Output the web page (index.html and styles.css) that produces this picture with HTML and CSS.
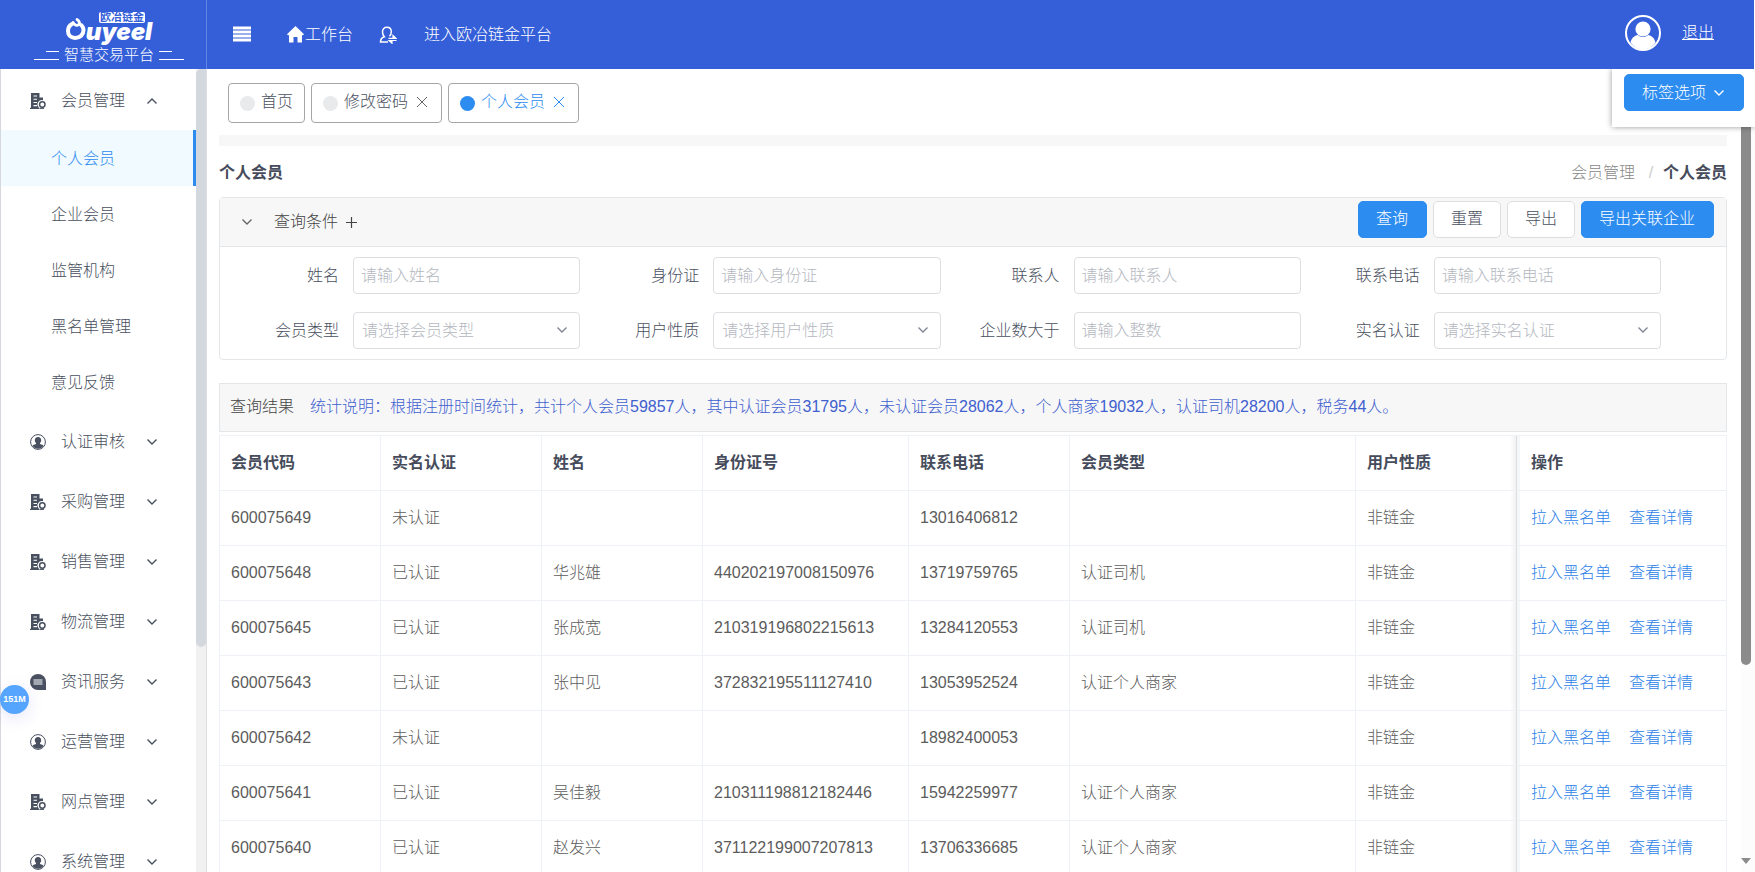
FILE: index.html
```html
<!DOCTYPE html>
<html lang="zh-CN">
<head>
<meta charset="utf-8">
<title>智慧交易平台</title>
<link rel="stylesheet" href="styles.css">
</head>
<body>
<svg class="defs" width="0" height="0" aria-hidden="true">
  <symbol id="i-down" viewBox="0 0 12 8"><path d="M1.500 1.500 6 6l4.500-4.500" fill="none" stroke="currentColor" stroke-width="1.400"/></symbol>
  <symbol id="i-up" viewBox="0 0 12 8"><path d="M1.500 6.500 6 2l4.500 4.500" fill="none" stroke="currentColor" stroke-width="1.400"/></symbol>
  <symbol id="i-close" viewBox="0 0 12 12"><path d="M1 1l10 10M11 1 1 11" fill="none" stroke="currentColor" stroke-width="1"/></symbol>
  <symbol id="i-building" viewBox="0 0 16 16"><path fill="currentColor" fill-rule="evenodd" d="M1 0h8.500v4.500H13v2.800A4.200 4.200 0 0 0 8.500 14l.8 2H0v-1.300h1zM3.500 2.500v1.100H7V2.500zm0 3.200v1.100H7V5.700zm0 3.200V10H7V8.900zm0 3.200v1.100H7v-1.100z"/><circle cx="12.300" cy="11.500" r="2.700" fill="none" stroke="currentColor" stroke-width="1.500"/><path d="M9.500 15.300h4.500" stroke="currentColor" stroke-width="1.200"/></symbol>
  <symbol id="i-person" viewBox="0 0 16 16"><circle cx="8" cy="8" r="7.400" fill="none" stroke="currentColor" stroke-width="1"/><path fill="currentColor" d="M8 3c2.100 0 3.200 1.400 3.200 3.200 0 1.200-.5 2.200-1.200 2.800v.9l2.900 1.200c.5.200.6.700.3 1.100A6.400 6.400 0 0 1 8 14.800a6.400 6.400 0 0 1-5.200-2.600c-.3-.4-.2-.9.300-1.100L6 9.900V9c-.7-.6-1.200-1.600-1.200-2.800C4.800 4.400 5.900 3 8 3z"/></symbol>
  <symbol id="i-chat" viewBox="0 0 16 16"><path fill="currentColor" d="M8 0a8 8 0 0 1 8 8v8H8A8 8 0 0 1 8 0z"/><path d="M3.500 6h9M3.500 8h9M3.500 10h9" stroke="#fff"/></symbol>
</svg>

<header class="topbar">
  <div class="brand">
    <div class="logo-tag">欧冶链金</div>
    <div class="logo"><svg class="logo-mark" viewBox="0 0 20 22"><path d="M6 6C3.300 7.500 2 10 2 13c0 4.200 3 6.900 7.200 6.900 4.800 0 8.300-3.300 8.300-7.700 0-2-.8-3.900-2.400-5.200" fill="none" stroke="#fff" stroke-width="4" stroke-linecap="round"/><path d="M7 4.500C8.500 7.500 11 8 12.700 6.500 14.200 5 13.300 3 11 1.500" fill="none" stroke="#fff" stroke-width="2.800" stroke-linecap="round"/></svg><span class="logo-word">uyeel</span></div>
    <div class="slogan"><i class="rule rule-l"></i>智慧交易平台<i class="rule rule-r"></i></div>
  </div>
  <nav class="topnav">
    <button class="icon-btn" aria-label="菜单"><svg width="18" height="16" viewBox="0 0 18 16"><path d="M0 2h18M0 6h18M0 10h18M0 14h18" stroke="#fff" stroke-width="3"/></svg></button>
    <a class="nav-home" href="#"><svg width="17" height="17" viewBox="0 0 17 17"><path fill="#fff" d="M8.500 0 17 8.300l-1.200 1.200-.8-.7V16.500h-4.500V11h-4v5.500H2V8.800l-.8.700L0 8.300z"/></svg>工作台</a>
    <a class="nav-user" href="#" aria-label="切换用户"><svg width="18" height="18" viewBox="0 0 18 18"><path d="M9 16H1.500c0-3 1.500-4.500 3.800-5.200C4 9.500 3.500 8 3.500 5.700 3.500 3 5.300 1.300 7.900 1.300s4.400 1.700 4.400 4.400c0 1.800-.6 3.300-1.800 4.500" fill="none" stroke="#fff" stroke-width="1.500"/><path d="M9.500 12.300H17L14 9.500v2.800M17.500 14.500H10l3 2.700v-2.700" fill="#fff" stroke="#fff" stroke-width="1.200"/></svg></a>
    <a class="nav-link" href="#">进入欧冶链金平台</a>
  </nav>
  <div class="account">
    <svg width="36" height="36" viewBox="0 0 36 36"><circle cx="18" cy="18" r="17" fill="none" stroke="#fff" stroke-width="2"/><circle cx="18" cy="14" r="7.600" fill="#fff"/><path fill="#fff" d="M5.500 27.500c1-4.500 4-7 7.500-7.500 3 2.700 7 2.700 10 0 3.500.5 6.500 3 7.500 7.500A16 16 0 0 1 18 34.500a16 16 0 0 1-12.500-7z"/></svg>
    <a href="#">退出</a>
  </div>
</header>

<div class="body">
  <aside class="sidebar">
    <ul class="menu">
      <li><a class="group" href="#"><svg class="gi"><use href="#i-building"/></svg>会员管理<svg class="arrow"><use href="#i-up"/></svg></a>
        <ul class="sub">
          <li><a class="active" href="#">个人会员</a></li>
          <li><a href="#">企业会员</a></li>
          <li><a href="#">监管机构</a></li>
          <li><a href="#">黑名单管理</a></li>
          <li><a href="#">意见反馈</a></li>
        </ul>
      </li>
      <li><a class="group" href="#"><svg class="gi"><use href="#i-person"/></svg>认证审核<svg class="arrow"><use href="#i-down"/></svg></a></li>
      <li><a class="group" href="#"><svg class="gi"><use href="#i-building"/></svg>采购管理<svg class="arrow"><use href="#i-down"/></svg></a></li>
      <li><a class="group" href="#"><svg class="gi"><use href="#i-building"/></svg>销售管理<svg class="arrow"><use href="#i-down"/></svg></a></li>
      <li><a class="group" href="#"><svg class="gi"><use href="#i-building"/></svg>物流管理<svg class="arrow"><use href="#i-down"/></svg></a></li>
      <li><a class="group" href="#"><svg class="gi"><use href="#i-chat"/></svg>资讯服务<svg class="arrow"><use href="#i-down"/></svg></a></li>
      <li><a class="group" href="#"><svg class="gi"><use href="#i-person"/></svg>运营管理<svg class="arrow"><use href="#i-down"/></svg></a></li>
      <li><a class="group" href="#"><svg class="gi"><use href="#i-building"/></svg>网点管理<svg class="arrow"><use href="#i-down"/></svg></a></li>
      <li><a class="group" href="#"><svg class="gi"><use href="#i-person"/></svg>系统管理<svg class="arrow"><use href="#i-down"/></svg></a></li>
    </ul>
    <div class="side-track"><div class="side-thumb"></div></div>
  </aside>

  <main class="main">
    <div class="content">
      <div class="tabs">
        <button class="tab"><i class="dot"></i>首页</button>
        <button class="tab closable"><i class="dot"></i>修改密码<svg class="x"><use href="#i-close"/></svg></button>
        <button class="tab closable current"><i class="dot"></i>个人会员<svg class="x"><use href="#i-close"/></svg></button>
      </div>
      <div class="strip"></div>
      <div class="heading">
        <h1>个人会员</h1>
        <nav class="crumbs"><a href="#">会员管理</a><span class="sep">/</span><strong>个人会员</strong></nav>
      </div>

      <section class="panel">
        <div class="panel-head">
          <button class="collapse"><svg class="arrow"><use href="#i-down"/></svg>查询条件 <svg class="plus" viewBox="0 0 12 12"><path d="M6 0v12M0 6h12" stroke="currentColor" stroke-width="1.300"/></svg></button>
          <div class="actions">
            <button class="btn primary">查询</button>
            <button class="btn">重置</button>
            <button class="btn">导出</button>
            <button class="btn primary">导出关联企业</button>
          </div>
        </div>
        <form class="filters">
          <div class="field"><label for="f1">姓名</label><input id="f1" type="text" placeholder="请输入姓名"></div>
          <div class="field"><label for="f2">身份证</label><input id="f2" type="text" placeholder="请输入身份证"></div>
          <div class="field"><label for="f3">联系人</label><input id="f3" type="text" placeholder="请输入联系人"></div>
          <div class="field"><label for="f4">联系电话</label><input id="f4" type="text" placeholder="请输入联系电话"></div>
          <div class="field"><label for="f5">会员类型</label><div class="select"><select id="f5"><option>请选择会员类型</option></select><svg class="arrow"><use href="#i-down"/></svg></div></div>
          <div class="field"><label for="f6">用户性质</label><div class="select"><select id="f6"><option>请选择用户性质</option></select><svg class="arrow"><use href="#i-down"/></svg></div></div>
          <div class="field"><label for="f7">企业数大于</label><input id="f7" type="text" placeholder="请输入整数"></div>
          <div class="field"><label for="f8">实名认证</label><div class="select"><select id="f8"><option>请选择实名认证</option></select><svg class="arrow"><use href="#i-down"/></svg></div></div>
        </form>
      </section>

      <div class="result-bar"><span>查询结果</span><span class="stats">统计说明：根据注册时间统计，共计个人会员59857人，其中认证会员31795人，未认证会员28062人，个人商家19032人，认证司机28200人，税务44人。</span></div>

      <table class="grid">
        <colgroup><col class="c-s"><col class="c-s"><col class="c-s"><col class="c-id"><col class="c-s"><col><col class="c-s"><col class="c-op"></colgroup>
        <thead><tr><th>会员代码</th><th>实名认证</th><th>姓名</th><th>身份证号</th><th>联系电话</th><th>会员类型</th><th>用户性质</th><th>操作</th></tr></thead>
        <tbody>
          <tr><td>600075649</td><td>未认证</td><td></td><td></td><td>13016406812</td><td></td><td>非链金</td><td><a href="#">拉入黑名单</a><a href="#">查看详情</a></td></tr>
          <tr><td>600075648</td><td>已认证</td><td>华兆雄</td><td>440202197008150976</td><td>13719759765</td><td>认证司机</td><td>非链金</td><td><a href="#">拉入黑名单</a><a href="#">查看详情</a></td></tr>
          <tr><td>600075645</td><td>已认证</td><td>张成宽</td><td>210319196802215613</td><td>13284120553</td><td>认证司机</td><td>非链金</td><td><a href="#">拉入黑名单</a><a href="#">查看详情</a></td></tr>
          <tr><td>600075643</td><td>已认证</td><td>张中见</td><td>372832195511127410</td><td>13053952524</td><td>认证个人商家</td><td>非链金</td><td><a href="#">拉入黑名单</a><a href="#">查看详情</a></td></tr>
          <tr><td>600075642</td><td>未认证</td><td></td><td></td><td>18982400053</td><td></td><td>非链金</td><td><a href="#">拉入黑名单</a><a href="#">查看详情</a></td></tr>
          <tr><td>600075641</td><td>已认证</td><td>吴佳毅</td><td>210311198812182446</td><td>15942259977</td><td>认证个人商家</td><td>非链金</td><td><a href="#">拉入黑名单</a><a href="#">查看详情</a></td></tr>
          <tr><td>600075640</td><td>已认证</td><td>赵发兴</td><td>371122199007207813</td><td>13706336685</td><td>认证个人商家</td><td>非链金</td><td><a href="#">拉入黑名单</a><a href="#">查看详情</a></td></tr>
        </tbody>
      </table>
    </div>
    <div class="main-track"><div class="main-thumb"></div><i class="track-arrow"></i></div>
    <div class="tag-options"><button class="btn primary">标签选项<svg class="arrow"><use href="#i-down"/></svg></button></div>
  </main>
</div>
<div class="mem-badge">151M</div>
</body>
</html>
```
FILE: styles.css
```css
* { box-sizing: border-box; }

body {
  margin: 0;
  height: 100vh;
  display: flex;
  flex-direction: column;
  overflow: hidden;
  background: #fff;
  color: #495060;
  font: 300 16px/24px "Liberation Sans", "Noto Sans CJK SC", sans-serif;
}

a { color: inherit; text-decoration: none; }
ul { list-style: none; margin: 0; padding: 0; }
button, input, select { font: inherit; color: inherit; margin: 0; }
button { border: 0; background: none; padding: 0; cursor: pointer; }
svg { flex: none; }
.defs { position: absolute; }
.arrow { width: 12px; height: 8px; }

/* Top bar */
.topbar {
  flex: none;
  height: 69px;
  margin-right: 1px;
  display: flex;
  align-items: center;
  background: #355fd9;
  color: #fff;
}
.brand {
  width: 207px;
  height: 100%;
  padding: 12px 0 0 12px;
  border-right: 1px solid #6485e2;
  display: flex;
  flex-direction: column;
  align-items: center;
}
.logo-tag {
  margin-left: 26px;
  padding: 0 1px;
  border-radius: 2px;
  background: #fff;
  color: #355fd9;
  font-size: 11px;
  line-height: 11px;
  font-weight: 700;
}
.logo {
  height: 20px;
  display: flex;
  align-items: flex-end;
}
.logo-mark { width: 20px; height: 22px; margin-bottom: 3px; }
.logo-word { font: italic 900 24px/22px Inter, sans-serif; }
.slogan {
  display: flex;
  align-items: center;
  gap: 5px;
  margin-top: 2px;
  font-size: 15px;
  line-height: 20px;
}
.rule {
  width: 25px;
  height: 9px;
  border-bottom: 1px solid #fff;
  background: linear-gradient(#fff, #fff) no-repeat 100% 0 / 13px 1px;
}
.rule-r { background-position: 0 0; }
.topnav { flex: 1; display: flex; align-items: center; padding-left: 26px; }
.topnav svg { display: block; }
.icon-btn { padding-bottom: 2px; }
.nav-home { display: flex; align-items: center; gap: 1px; margin-left: 36px; }
.nav-user { margin-left: 26px; }
.nav-link { margin-left: 27px; }
.account { display: flex; align-items: center; gap: 21px; padding: 0 40px 3px 0; }
.account a { text-decoration: underline; }

/* Frame */
.body { flex: 1; min-height: 0; display: flex; }
.sidebar {
  flex: none;
  width: 207px;
  display: flex;
  border-left: 1px solid #d5d8dc;
}
.menu { flex: 1; padding-top: 1px; overflow: hidden; }
.group {
  display: flex;
  align-items: center;
  height: 60px;
  padding: 1px 0 0 29px;
}
.gi { width: 16px; height: 16px; margin-right: 15px; }
.group .arrow { margin-left: 21px; }
.sub { padding-bottom: 1px; }
.sub a {
  display: flex;
  align-items: center;
  height: 56px;
  padding: 1px 0 0 50px;
}
.sub .active {
  background: #f0faff;
  border-right: 3px solid #2d8cf0;
  color: #2d8cf0;
}
.side-track {
  width: 11px;
  background: #f1f1f1;
  border-right: 1px solid #dcdee2;
}
.side-thumb { height: 72%; border-radius: 6px 0 6px 6px; background: #d3d7de; }

.main { position: relative; flex: 1; min-width: 0; display: flex; overflow: hidden; }
.content { flex: 1; min-width: 0; padding: 14px 14px 0 12px; }
.main-track {
  flex: none;
  width: 14px;
  background: #fcfcfc;
  padding-right: 4px;
  display: flex;
  flex-direction: column;
  justify-content: space-between;
}
.main-thumb { height: 596px; border-radius: 5px; background: #8b8b8b; }
.track-arrow {
  margin-bottom: 8px;
  border: 5px solid transparent;
  border-top: 6px solid #8b8b8b;
  border-bottom: 0;
}
.tag-options {
  position: absolute;
  top: 0;
  right: 0;
  padding: 5px 11px 16px 12px;
  background: #fff;
  box-shadow: 0 0 6px rgba(0, 0, 0, .4);
}
.tag-options .btn { display: flex; align-items: center; gap: 7px; padding: 0 18px 0 17px; }

/* Tabs */
.tabs { display: flex; gap: 6px; padding-left: 9px; }
.tab {
  display: flex;
  align-items: center;
  height: 40px;
  padding: 0 11px 3px;
  border: 1px solid #a6a6a6;
  border-radius: 4px;
  background: #fff;
}
.closable { padding-right: 13px; }
.dot { width: 15px; height: 15px; margin: 3px 6px 0 0; border-radius: 50%; background: #e8eaec; }
.x { width: 12px; height: 12px; margin-left: 8px; color: #666; }
.current, .current .x { color: #2d8cf0; }
.current .dot { background: #2d8cf0; }
.strip { height: 11px; margin-top: 12px; background: #f7f7f7; }

.heading { display: flex; justify-content: space-between; padding: 15px 0 12px; color: #464c5b; }
.heading h1 { margin: 0; font-size: 16px; line-height: 24px; font-weight: 700; }
.crumbs { display: flex; }
.crumbs a { color: #888; }
.crumbs strong { font-weight: 700; }
.sep { width: 28px; text-align: center; color: #ccc; padding-left: 4px; }

/* Filter panel */
.panel { border: 1px solid #e4e7ea; border-radius: 4px; }
.panel-head {
  display: flex;
  justify-content: space-between;
  align-items: flex-start;
  height: 49px;
  padding: 3px 12px 0 21px;
  background: #f7f7f7;
  border-bottom: 1px solid #e4e7ea;
}
.collapse { display: flex; align-items: center; height: 42px; color: #444; }
.collapse .arrow { margin-right: 21px; color: #666; }
.plus { width: 11px; height: 11px; margin-left: 8px; }
.actions { display: flex; gap: 6px; }
.btn {
  height: 37px;
  padding: 0 17px 2px;
  border: 1px solid #dcdee2;
  border-radius: 5px;
  background: #fff;
  color: #495060;
}
.btn.primary { border-color: #2d8cf0; background: #2d8cf0; color: #fff; }
.actions .primary { padding-right: 18px; }
.filters {
  display: grid;
  grid-template-columns: repeat(4, 1fr);
  row-gap: 18px;
  padding: 10px 65px 10px 0;
}
.field { display: flex; align-items: center; }
.field label { width: 133px; padding-right: 14px; text-align: right; }
.field input, .select { flex: 1; min-width: 0; }
.field input, .select select {
  width: 100%;
  height: 37px;
  padding: 0 8px;
  border: 1px solid #dcdee2;
  border-radius: 4px;
  background: #fff;
}
.field input { padding: 0 7px; }
.field input::placeholder { color: #b4b8c0; }
.select { position: relative; }
.select select { appearance: none; color: #b4b8c0; }
.select .arrow { position: absolute; right: 12px; top: 14px; color: #808695; pointer-events: none; }

/* Results */
.result-bar {
  display: flex;
  gap: 16px;
  margin-top: 23px;
  padding: 11px 10px 12px;
  border: 1px solid #e4e7ea;
  background: #f7f7f7;
  color: #444;
}
.stats { color: #3f60cf; }
.grid {
  width: 100%;
  margin-top: 3px;
  table-layout: fixed;
  border-collapse: separate;
  border-spacing: 0;
  border: 1px solid #eef1f5;
  border-width: 1px 0 0 1px;
}
.c-s { width: 161px; }
.c-id { width: 206px; }
.c-op { width: 210px; }
.grid th, .grid td {
  height: 55px;
  padding: 0 11px;
  border: 1px solid #eef1f5;
  border-width: 0 1px 1px 0;
  text-align: left;
  color: #5c5c5c;
  white-space: nowrap;
}
.grid th { color: #464c5b; font-weight: 700; }
.grid :is(th, td):nth-child(7) {
  border-right-color: #dcdee2;
  background: linear-gradient(to left, #f1f1f3, #fff) no-repeat 100% 0 / 6px 100%;
}
.grid :is(th, td):nth-child(8) {
  padding-left: 14px;
  background: linear-gradient(#f6f7f9, #f6f7f9) no-repeat 0 0 / 3px 100%;
}
.grid td a { color: #2d82e8; margin-right: 18px; }

/* Floating memory badge */
.mem-badge {
  position: absolute;
  left: 0;
  top: 685px;
  width: 29px;
  height: 29px;
  border-radius: 50%;
  background: #55a5ff;
  box-shadow: 0 4px 16px rgba(80, 80, 220, .15);
  color: #fff;
  font: 700 9px/29px "Liberation Sans", sans-serif;
  text-align: center;
}
```
